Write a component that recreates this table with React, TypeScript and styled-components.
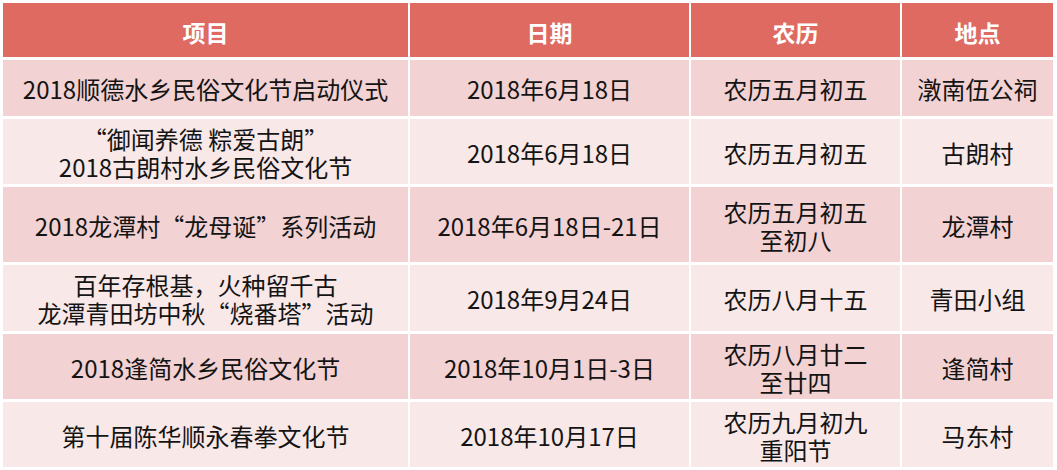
import styled, { createGlobalStyle } from "styled-components";

const GlobalStyle = createGlobalStyle`
  html, body {
    margin: 0;
    padding: 0;
    background: #ffffff;
  }
  body {
    font-family: "Noto Sans CJK SC", sans-serif;
  }
`;

const Table = styled.div`
  display: grid;
  grid-template-columns: 405px 279px 209px 151px;
  grid-template-rows: 54px 56px 65px 75px 66px 65px 65px;
  column-gap: 2px;
  row-gap: 3px;
  padding: 3px 0 0 3px;
  width: 1057px;
  height: 470px;
  box-sizing: border-box;
`;

const HeadCell = styled.div`
  display: flex;
  align-items: center;
  justify-content: center;
  padding-top: 3px;
  background: #df6a62;
  color: #ffffff;
  font-family: "Noto Sans CJK SC", sans-serif;
  font-weight: 700;
  font-size: 23px;
`;

const Cell = styled.div<{ $odd: boolean }>`
  display: flex;
  flex-direction: column;
  align-items: center;
  justify-content: center;
  text-align: center;
  padding-top: 2px;
  background: ${(p) => (p.$odd ? "#f2d2d2" : "#f8e8e8")};
  color: #141414;
  font-family: "Noto Sans CJK SC", "Liberation Sans", sans-serif;
  font-size: 24px;
  white-space: nowrap;
`;

const Line = styled.div`
  display: block;
  height: 28px;
  line-height: 28px;
`;

const headers = ["项目", "日期", "农历", "地点"];

const rows: string[][][] = [
  [["2018顺德水乡民俗文化节启动仪式"], ["2018年6月18日"], ["农历五月初五"], ["潡南伍公祠"]],
  [["“御闻养德 粽爱古朗”", "2018古朗村水乡民俗文化节"], ["2018年6月18日"], ["农历五月初五"], ["古朗村"]],
  [["2018龙潭村“龙母诞”系列活动"], ["2018年6月18日-21日"], ["农历五月初五", "至初八"], ["龙潭村"]],
  [["百年存根基，火种留千古", "龙潭青田坊中秋“烧番塔”活动"], ["2018年9月24日"], ["农历八月十五"], ["青田小组"]],
  [["2018逢简水乡民俗文化节"], ["2018年10月1日-3日"], ["农历八月廿二", "至廿四"], ["逢简村"]],
  [["第十届陈华顺永春拳文化节"], ["2018年10月17日"], ["农历九月初九", "重阳节"], ["马东村"]],
];

export default function App() {
  return (
    <>
      <GlobalStyle />
      <Table>
        {headers.map((h) => (
          <HeadCell key={h}>{h}</HeadCell>
        ))}
        {rows.map((row, r) =>
          row.map((lines, c) => (
            <Cell key={`${r}-${c}`} $odd={r % 2 === 0}>
              {lines.map((line) => (
                <Line key={line}>{line}</Line>
              ))}
            </Cell>
          ))
        )}
      </Table>
    </>
  );
}
